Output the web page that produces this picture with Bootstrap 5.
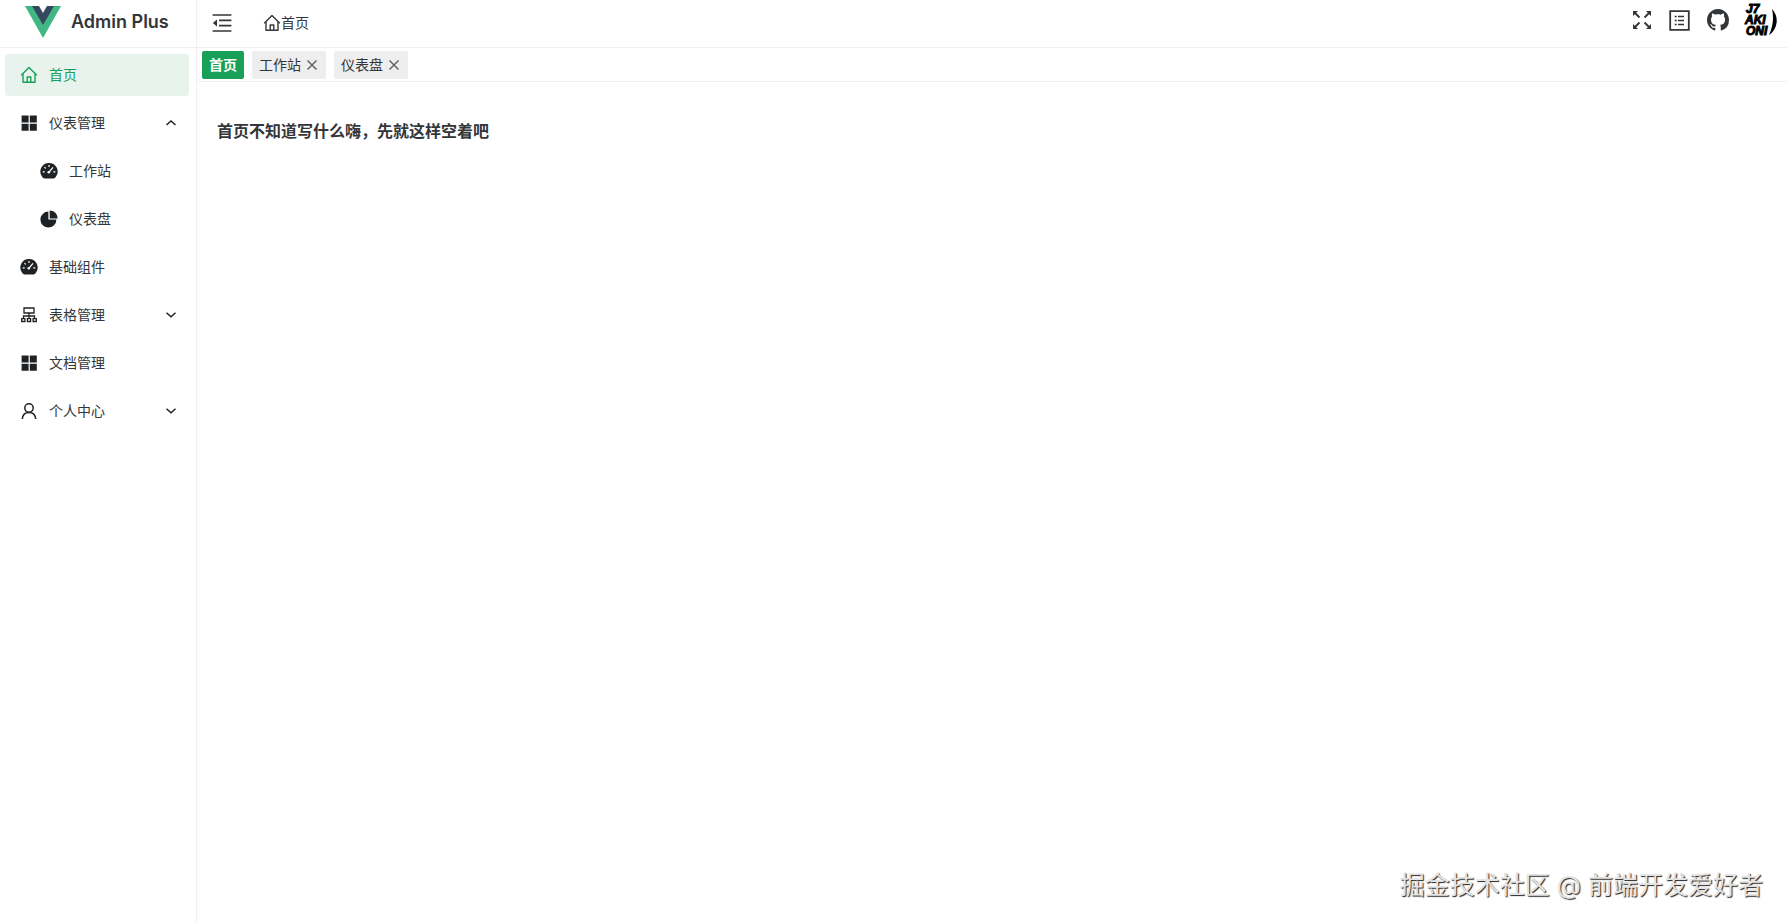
<!DOCTYPE html>
<html lang="zh-CN">
<head>
<meta charset="utf-8">
<meta name="viewport" content="width=device-width, initial-scale=1">
<title>Admin Plus</title>
<link href="https://cdn.jsdelivr.net/npm/bootstrap@5.3.0/dist/css/bootstrap.min.css" rel="stylesheet">
<style>
  body { font-family: Inter, "Noto Sans CJK SC", sans-serif; font-size: 14px; line-height: 22px; color: #333639; background: #fff; }
  a, a:hover { color: inherit; text-decoration: none; }
  svg { display: block; flex: none; }
  .sidebar { flex: 0 0 197px; border-right: 1px solid #efeff5; }
  .brand { height: 47px; padding: 0 0 3px 25px; gap: 10px; font-size: 18px; font-weight: 600; }
  .topbar { height: 48px; border-bottom: 1px solid #efeff5; padding: 0 10px 2px 15px; }
  .menu { padding: 6px 7px 0 5px; gap: 6px; border-top: 1px solid #efeff5; }
  .menu-item { height: 42px; padding: 0 12px 0 15px; gap: 11px; border: 0; border-radius: 3px; background: transparent; color: #333639; text-align: left; width: 100%; }
  .menu-item svg { color: #1f2225; }
  .menu-item.active { background: #e9f3ee; color: #18a058; }
  .menu-item.active svg { color: #18a058; }
  .submenu { gap: 6px; }
  .submenu .menu-item { padding-left: 35px; }
  .icon-btn { border: 0; padding: 0; background: transparent; color: #333639; }
  .crumb { margin-left: 31px; }
  .tools { gap: 17px; padding-bottom: 5px; }
  .avatar { margin-left: -3px; }
  .avatar text { font: italic 700 12px/11px "Liberation Sans", sans-serif; stroke: #000; stroke-width: 1px; }
  .tabs { height: 34px; border-bottom: 1px solid #efeff5; padding: 0 5px; gap: 8px; }
  .tab-tag { height: 28px; padding: 0 7px; gap: 5px; border-radius: 2px; background: #eee; }
  .tab-tag + .tab-tag { padding-right: 8px; }
  .tab-tag.active { background: #18a058; color: #fff; font-weight: 700; }
  .tab-tag .icon-btn { color: #666; }
  .page-title { font-size: 16px; line-height: 26px; font-weight: 700; margin: 0; padding: 36px 20px; }
  .watermark { right: 24px; bottom: 20px; font-size: 25px; line-height: 36px; color: #e4e4e4; text-shadow: 1px 1px 1px #222; }
</style>
</head>
<body>
<svg class="d-none" aria-hidden="true">
  <symbol id="home" viewBox="0 0 18 18"><path d="M1.2 9.3 9 1.6l7.8 7.7M3 8v8.3h12V8M7.2 16v-5h3.6v5" fill="none" stroke="currentColor" stroke-width="1.4" stroke-linejoin="round"/></symbol>
  <symbol id="grid" viewBox="0 0 18 18"><path d="M1.6 1.6h7v7h-7zM9.8 1.6h7v7h-7zM1.6 9.8h7v7h-7zM9.8 9.8h7v7h-7z" fill="currentColor"/></symbol>
  <symbol id="gauge" viewBox="0 0 18 18"><path d="M9 .9a8.6 8.6 0 0 0-7.3 13.2q1.2 2.5 3 2.5h8.6q1.8 0 3-2.5A8.6 8.6 0 0 0 9 .9z" fill="currentColor"/><path d="M9 3v2M4.4 5.2l1.4 1.2M2.7 9.8h2M13.3 9.8h2" stroke="#fff" stroke-width="1.2"/><path d="M8.8 10.3 13 5.4" stroke="#fff" stroke-width="1.3"/><circle cx="8.8" cy="10.2" r="1.3" fill="#fff"/></symbol>
  <symbol id="pie" viewBox="0 0 18 18"><path d="M8.4 1.6v8h8A8 8 0 1 1 8.4 1.6z" fill="currentColor"/><path d="M9.7.4a8 8 0 0 1 8 8h-8z" fill="currentColor"/></symbol>
  <symbol id="tree" viewBox="0 0 18 18"><path d="M4 2h10v5H4zM9 7v5.5M3.5 12.5V10h11v2.5M1.7 12.7h3.2v2.8H1.7zM7.4 12.7h3.2v2.8H7.4zM13.1 12.7h3.2v2.8h-3.2z" fill="none" stroke="currentColor" stroke-width="1.3"/></symbol>
  <symbol id="user" viewBox="0 0 18 18"><circle cx="9" cy="6" r="4.2" fill="none" stroke="currentColor" stroke-width="1.5"/><path d="M2.3 17c.3-4 2.8-6.6 6.7-6.6s6.4 2.6 6.7 6.6" fill="none" stroke="currentColor" stroke-width="1.5"/></symbol>
  <symbol id="down" viewBox="0 0 12 12"><path d="m1.5 3.8 4.5 4 4.5-4" fill="none" stroke="currentColor" stroke-width="1.5"/></symbol>
  <symbol id="up" viewBox="0 0 12 12"><path d="m1.5 8 4.5-4 4.5 4" fill="none" stroke="currentColor" stroke-width="1.5"/></symbol>
  <symbol id="close" viewBox="0 0 12 12"><path d="m1.5 1.5 9 9M10.5 1.5l-9 9" stroke="currentColor" stroke-width="1.5"/></symbol>
</svg>
<div class="d-flex min-vh-100 position-relative">
  <aside class="sidebar">
    <a href="#" class="brand d-flex align-items-center">
      <svg width="36" height="32" viewBox="0 0 36 32"><path d="M0 0h36L18 32z" fill="#41b883"/><path d="M7 0h22L18 19z" fill="#34495e"/><path d="M14 0h8l-4 7z" fill="#fff"/></svg>
      <span>Admin Plus</span>
    </a>
    <nav class="menu d-flex flex-column">
      <a href="#" class="menu-item active d-flex align-items-center"><svg width="18" height="18"><use href="#home"/></svg>首页</a>
      <button type="button" class="menu-item d-flex align-items-center" data-bs-toggle="collapse" data-bs-target="#meters" aria-expanded="true"><svg width="18" height="18"><use href="#grid"/></svg><span class="flex-grow-1">仪表管理</span><svg width="12" height="12"><use href="#up"/></svg></button>
      <div class="collapse show" id="meters">
        <div class="submenu d-flex flex-column">
          <a href="#" class="menu-item d-flex align-items-center"><svg width="18" height="18"><use href="#gauge"/></svg>工作站</a>
          <a href="#" class="menu-item d-flex align-items-center"><svg width="18" height="18"><use href="#pie"/></svg>仪表盘</a>
        </div>
      </div>
      <a href="#" class="menu-item d-flex align-items-center"><svg width="18" height="18"><use href="#gauge"/></svg>基础组件</a>
      <button type="button" class="menu-item d-flex align-items-center"><svg width="18" height="18"><use href="#tree"/></svg><span class="flex-grow-1">表格管理</span><svg width="12" height="12"><use href="#down"/></svg></button>
      <a href="#" class="menu-item d-flex align-items-center"><svg width="18" height="18"><use href="#grid"/></svg>文档管理</a>
      <button type="button" class="menu-item d-flex align-items-center"><svg width="18" height="18"><use href="#user"/></svg><span class="flex-grow-1">个人中心</span><svg width="12" height="12"><use href="#down"/></svg></button>
    </nav>
  </aside>
  <div class="flex-grow-1">
    <header class="topbar d-flex align-items-center">
      <button type="button" class="icon-btn" aria-label="收起菜单"><svg width="20" height="20" viewBox="0 0 20 20"><path d="M.6 2h18.8M7 7.3h12.4M7 12.7h12.4M.6 18h18.8" stroke="currentColor" stroke-width="1.7"/><path d="M5 6.4v7.2L.8 10z" fill="currentColor"/></svg></button>
      <a href="#" class="crumb d-flex align-items-center"><svg width="18" height="18"><use href="#home"/></svg>首页</a>
      <div class="tools d-flex align-items-center ms-auto">
        <button type="button" class="icon-btn" aria-label="全屏"><svg width="20" height="20" viewBox="0 0 20 20"><path d="m2.5 2.5 5 5M17.5 2.5l-5 5M2.5 17.5l5-5M17.5 17.5l-5-5" stroke="currentColor" stroke-width="1.8"/><path d="M1 1h5L1 6zM19 1v5l-5-5zM1 19v-5l5 5zM19 19h-5l5-5z" fill="currentColor"/></svg></button>
        <button type="button" class="icon-btn" aria-label="文档"><svg width="21" height="21" viewBox="0 0 21 21"><path d="M1.2 1.2h18.6v18.6H1.2z" fill="none" stroke="currentColor" stroke-width="1.8"/><path d="M9 6.5h6M9 10.5h6M9 14.5h6M5.7 6.5h2M5.7 10.5h2M5.7 14.5h2" stroke="currentColor" stroke-width="1.5"/></svg></button>
        <a href="#" aria-label="GitHub"><svg width="22" height="22" viewBox="0 0 16 16"><path fill="currentColor" d="M8 0C3.58 0 0 3.58 0 8c0 3.54 2.29 6.53 5.47 7.59.4.07.55-.17.55-.38 0-.19-.01-.82-.01-1.49-2.01.37-2.53-.49-2.69-.94-.09-.23-.48-.94-.82-1.13-.28-.15-.68-.52-.01-.53.63-.01 1.08.58 1.23.82.72 1.21 1.87.87 2.33.66.07-.52.28-.87.51-1.07-1.78-.2-3.64-.89-3.64-3.95 0-.87.31-1.59.82-2.15-.08-.2-.36-1.02.08-2.12 0 0 .67-.21 2.2.82.64-.18 1.32-.27 2-.27s1.36.09 2 .27c1.53-1.04 2.2-.82 2.2-.82.44 1.1.16 1.92.08 2.12.51.56.82 1.27.82 2.15 0 3.07-1.87 3.75-3.65 3.95.29.25.54.73.54 1.48 0 1.07-.01 1.93-.01 2.2 0 .21.15.46.55.38A8.01 8.01 0 0 0 16 8c0-4.42-3.58-8-8-8z"/></svg></a>
        <a href="#" class="avatar" aria-label="用户头像"><svg width="34" height="34" viewBox="0 0 34 34"><text x="3" y="10">J7</text><text x="2" y="21">AKI</text><text x="3" y="32">ONI</text><path d="M29 6q3 13-3 26A17 17 0 0 0 29 6z"/></svg></a>
      </div>
    </header>
    <nav class="tabs d-flex align-items-center">
      <a href="#" class="tab-tag active d-flex align-items-center">首页</a>
      <div class="tab-tag d-flex align-items-center"><a href="#">工作站</a><button type="button" class="icon-btn" aria-label="关闭工作站"><svg width="12" height="12"><use href="#close"/></svg></button></div>
      <div class="tab-tag d-flex align-items-center"><a href="#">仪表盘</a><button type="button" class="icon-btn" aria-label="关闭仪表盘"><svg width="12" height="12"><use href="#close"/></svg></button></div>
    </nav>
    <main><h3 class="page-title">首页不知道写什么嗨，先就这样空着吧</h3></main>
  </div>
  <div class="watermark position-absolute">掘金技术社区 @ 前端开发爱好者</div>
</div>
<script src="https://cdn.jsdelivr.net/npm/bootstrap@5.3.0/dist/js/bootstrap.bundle.min.js"></script>
</body>
</html>
